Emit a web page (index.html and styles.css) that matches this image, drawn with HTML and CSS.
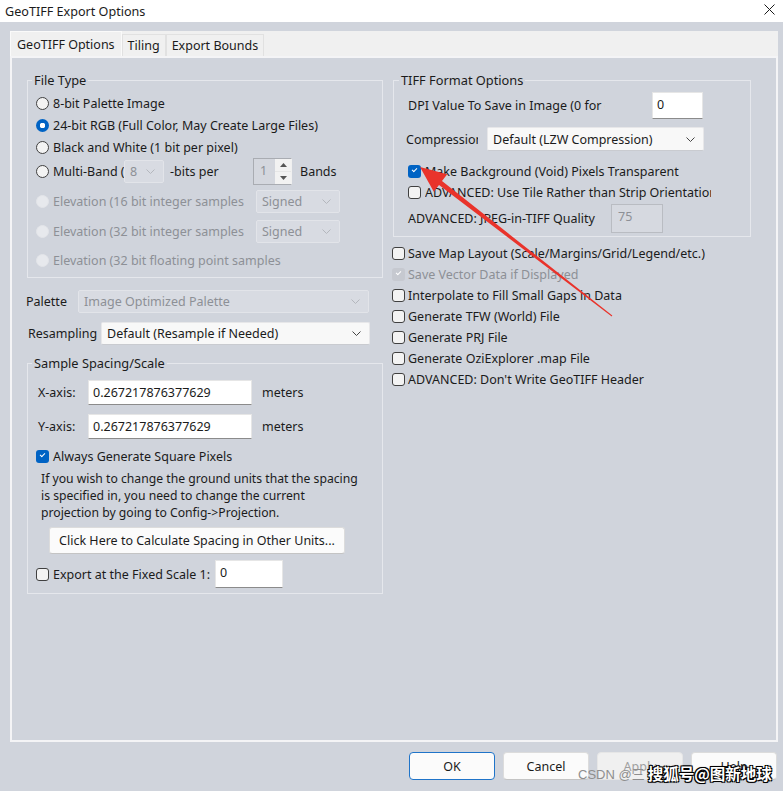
FILE: index.html
```html
<!DOCTYPE html>
<html lang="en">
<head>
    <meta charset="UTF-8">
    <title>GeoTIFF Export Options</title>
    <link rel="stylesheet" href="styles.css">
</head>
<body>
<div class="window">
    <div class="titlebar">
        <span class="title">GeoTIFF Export Options</span>
        <svg class="close" width="11" height="11" viewBox="0 0 11 11"><path d="M0.5 0.5 L10.5 10.5 M10.5 0.5 L0.5 10.5" stroke="#1a1a1a" stroke-width="1"/></svg>
    </div>

    <div class="tabs">
        <div class="tab active">GeoTIFF Options</div>
        <div class="tab">Tiling</div>
        <div class="tab">Export Bounds</div>
    </div>

    <div class="panel">
        <!-- left column -->
        <div class="col col-left">
            <fieldset class="group group-filetype">
                <legend>File Type</legend>
                <div class="row r1"><span class="radio"></span>8-bit Palette Image</div>
                <div class="row r2"><span class="radio on"></span>24-bit RGB (Full Color, May Create Large Files)</div>
                <div class="row r3"><span class="radio"></span>Black and White (1 bit per pixel)</div>
                <div class="row r4">
                    <span class="radio"></span>
                    <span class="clip w-multi">Multi-Band (</span>
                    <div class="select off w-bits"><span>8</span><svg class="chev" width="9" height="5" viewBox="0 0 9 5"><path d="M0.5 0.5 L4.5 4.5 L8.5 0.5" fill="none" stroke="#b4b7bd"/></svg></div>
                    <span class="bits-per">-bits per</span>
                    <div class="spin">
                        <span class="spin-val">1</span>
                        <span class="spin-btns">
                            <span class="spin-up"><svg width="7" height="4" viewBox="0 0 7 4"><path d="M0 4 L3.5 0 L7 4 Z" fill="#555"/></svg></span>
                            <span class="spin-down"><svg width="7" height="4" viewBox="0 0 7 4"><path d="M0 0 L3.5 4 L7 0 Z" fill="#555"/></svg></span>
                        </span>
                    </div>
                    <span class="bands">Bands</span>
                </div>
                <div class="row r5 dim">
                    <span class="radio dis"></span>
                    <span class="clip w-elev">Elevation (16 bit integer samples)</span>
                    <div class="select off w-signed"><span>Signed</span><svg class="chev" width="9" height="5" viewBox="0 0 9 5"><path d="M0.5 0.5 L4.5 4.5 L8.5 0.5" fill="none" stroke="#b4b7bd"/></svg></div>
                </div>
                <div class="row r6 dim">
                    <span class="radio dis"></span>
                    <span class="clip w-elev">Elevation (32 bit integer samples)</span>
                    <div class="select off w-signed"><span>Signed</span><svg class="chev" width="9" height="5" viewBox="0 0 9 5"><path d="M0.5 0.5 L4.5 4.5 L8.5 0.5" fill="none" stroke="#b4b7bd"/></svg></div>
                </div>
                <div class="row r7 dim"><span class="radio dis"></span>Elevation (32 bit floating point samples</div>
            </fieldset>

            <div class="line palette-line">
                <span class="lbl w-palette">Palette</span>
                <div class="select off w-palette-sel"><span>Image Optimized Palette</span><svg class="chev" width="9" height="5" viewBox="0 0 9 5"><path d="M0.5 0.5 L4.5 4.5 L8.5 0.5" fill="none" stroke="#b4b7bd"/></svg></div>
            </div>
            <div class="line resample-line">
                <span class="lbl w-resample">Resampling</span>
                <div class="select w-resample-sel"><span>Default (Resample if Needed)</span><svg class="chev" width="9" height="5" viewBox="0 0 9 5"><path d="M0.5 0.5 L4.5 4.5 L8.5 0.5" fill="none" stroke="#444"/></svg></div>
            </div>

            <fieldset class="group group-spacing">
                <legend>Sample Spacing/Scale</legend>
                <div class="axis">
                    <span class="axis-lbl">X-axis:</span>
                    <div class="input w-axis">0.267217876377629</div>
                    <span class="unit">meters</span>
                </div>
                <div class="axis axis-y">
                    <span class="axis-lbl">Y-axis:</span>
                    <div class="input w-axis">0.267217876377629</div>
                    <span class="unit">meters</span>
                </div>
                <div class="check-row square-row"><span class="check on"></span>Always Generate Square Pixels</div>
                <p class="note">If you wish to change the ground units that the spacing<br>is specified in, you need to change the current<br>projection by going to Config-&gt;Projection.</p>
                <div class="btn calc-btn">Click Here to Calculate Spacing in Other Units...</div>
                <div class="check-row scale-row">
                    <span class="check"></span>
                    <span>Export at the Fixed Scale 1:</span>
                    <div class="input top w-scale">0</div>
                </div>
            </fieldset>
        </div>

        <!-- right column -->
        <div class="col col-right">
            <fieldset class="group group-tiff">
                <legend>TIFF Format Options</legend>
                <div class="line dpi-line">
                    <span class="lbl clip w-dpi">DPI Value To Save in Image (0 for default)</span>
                    <div class="input top w-dpi-in">0</div>
                </div>
                <div class="line comp-line">
                    <span class="lbl clip w-comp">Compression</span>
                    <div class="select w-comp-sel"><span>Default (LZW Compression)</span><svg class="chev" width="9" height="5" viewBox="0 0 9 5"><path d="M0.5 0.5 L4.5 4.5 L8.5 0.5" fill="none" stroke="#444"/></svg></div>
                </div>
                <div class="check-row bg-row"><span class="check on"></span>Make Background (Void) Pixels Transparent</div>
                <div class="check-row tile-row"><span class="check"></span><span class="clip w-tile">ADVANCED: Use Tile Rather than Strip Orientation</span></div>
                <div class="line jpeg-line">
                    <span class="lbl w-jpeg">ADVANCED: JPEG-in-TIFF Quality</span>
                    <div class="input top off w-jpeg-in">75</div>
                </div>
            </fieldset>

            <div class="checks">
                <div class="opt"><span class="check"></span>Save Map Layout (Scale/Margins/Grid/Legend/etc.)</div>
                <div class="opt dim"><span class="check on dis"></span>Save Vector Data if Displayed</div>
                <div class="opt"><span class="check"></span>Interpolate to Fill Small Gaps in Data</div>
                <div class="opt"><span class="check"></span>Generate TFW (World) File</div>
                <div class="opt"><span class="check"></span>Generate PRJ File</div>
                <div class="opt"><span class="check"></span>Generate OziExplorer .map File</div>
                <div class="opt"><span class="check"></span>ADVANCED: Don't Write GeoTIFF Header</div>
            </div>
        </div>
    </div>

    <div class="buttons">
        <div class="btn dlg default">OK</div>
        <div class="btn dlg">Cancel</div>
        <div class="btn dlg off">Apply</div>
        <div class="btn dlg">Help</div>
    </div>

    <!-- annotation arrow over the screenshot -->
    <svg class="arrow" width="783" height="791" viewBox="0 0 783 791">
        <polygon points="420,167 447.2,174.3 442,181 612.3,315.6 611.7,316.4 439,185 433.8,191.7" fill="#e9332b"/>
    </svg>

    <div class="watermark"><span class="wm-csdn">CSDN @三</span><span class="wm-sohu">搜狐号@图新地球</span></div>
</div>
</body>
</html>
```

FILE: styles.css
```css
:root {
    --face: #d0d4dc;
    --text: #1b1b1b;
    --dim: #8d9096;
    --blue: #0063c4;
}

* {
    box-sizing: border-box;
}

body {
    margin: 0;
    font-family: 'Noto Sans', 'Noto Sans CJK SC', sans-serif;
    font-size: 12.5px;
    color: var(--text);
    background: var(--face);
}

.window {
    position: relative;
    width: 783px;
    height: 791px;
    background: var(--face);
    overflow: hidden;
}

.titlebar {
    height: 22px;
    background: #fff;
    display: flex;
    align-items: center;
    padding: 0 8px 0 5px;
}

.title {
    font-size: 12.6px;
}

.close {
    margin-left: auto;
    margin-top: -4px;
}

/* tabs */
.tabs {
    margin: 9px 5px 0 10px;
    height: 25px;
    background: #f0f0f0;
    display: flex;
    align-items: flex-end;
}

.tab {
    height: 22px;
    padding: 0 5px;
    border: 1px solid #e1e1e1;
    border-bottom: none;
    display: flex;
    align-items: center;
    font-size: 12.5px;
}

.tab.active {
    height: 25px;
    border-color: #fafafa;
    padding: 0 6px;
}

/* tab page */
.panel {
    margin: 0 5px 0 10px;
    height: 686px;
    border: 2px solid #f4f4f6;
    display: flex;
    gap: 10px;
    padding: 14px 0 0 14px;
}

.col-left {
    width: 357px;
}

.col-right {
    width: 359px;
}

.group {
    margin: 0;
    border: 1px solid #e5e7ec;
    padding: 0;
}

.group legend {
    padding: 0 2px;
    margin-left: -4px;
    line-height: 16px;
    font-size: 12.8px;
}

.row, .line, .check-row, .opt, .axis {
    display: flex;
    align-items: center;
    white-space: nowrap;
}

.dim {
    color: var(--dim);
}

.clip {
    overflow: hidden;
    white-space: nowrap;
    display: block;
}

/* file type */
.group-filetype {
    margin-left: 1px;
    width: 356px;
    padding: 4px 0 5px 8px;
}

.row {
    height: 22px;
}

.r3 { height: 23px; }
.r4 { height: 24px; }
.r5 { height: 24px; margin-top: 6px; }
.r6 { height: 24px; margin-top: 6px; }
.r7 { height: 24px; margin-top: 5px; }

.radio {
    width: 13px;
    height: 13px;
    border-radius: 50%;
    border: 1px solid #404040;
    background: #f3f3f3;
    margin-right: 4px;
    flex: none;
}

.radio.on {
    border: none;
    background: radial-gradient(circle, #fff 0 2.6px, var(--blue) 3px);
}

.radio.dis {
    border-color: #e3e5e9;
    background: #e7e9ed;
}

.w-multi { width: 71px; }
.w-bits { width: 40px; height: 23px; }
.bits-per { margin-left: 6px; width: 83px; }
.w-elev { width: 191px; margin-right: 12px; }
.w-signed { width: 84px; height: 23px; }

.spin {
    display: flex;
    height: 27px;
    width: 39px;
    border: 1px solid #a9acb2;
    border-right-color: #f0f0f0;
}

.spin-val {
    flex: 1;
    color: var(--dim);
    background: #d4d7de;
    padding: 3px 0 0 6px;
}

.spin-btns {
    width: 16px;
    display: flex;
    flex-direction: column;
    gap: 1px;
    background: #e6e6e6;
}

.spin-up, .spin-down {
    flex: 1;
    background: #f2f2f2;
    display: flex;
    align-items: center;
    justify-content: center;
}

.bands {
    margin-left: 8px;
}

/* selects */
.select {
    display: flex;
    align-items: center;
    background: #f8f8f8;
    border: 1px solid #e7e7e9;
    border-bottom-color: #c9cbd0;
    border-radius: 2px;
    padding: 0 8px 0 5px;
    flex: none;
}

.select.off {
    background: #d8dbe2;
    border-color: #e2e4e9;
    color: var(--dim);
}

.select .chev {
    margin-left: auto;
}

.lbl {
    flex: none;
}

.palette-line {
    margin-top: 12px;
    height: 23px;
}

.w-palette { width: 52px; }
.w-palette-sel { width: 291px; height: 23px; }

.resample-line {
    margin-top: 9px;
    height: 23px;
    padding-left: 2px;
}

.w-resample { width: 73px; }
.w-resample-sel { width: 269px; height: 23px; }

/* inputs */
.input {
    background: #fff;
    border: 1px solid #e6e6e6;
    border-bottom-color: #8b8b8b;
    display: flex;
    align-items: center;
    padding: 0 4px;
    flex: none;
}

.input.top {
    align-items: flex-start;
    padding-top: 3px;
}

.input.off {
    background: #d6d9e0;
    border: 1px solid #b9bcc2;
    color: var(--dim);
    padding-left: 6px;
}

/* sample spacing */
.group-spacing {
    margin: 10px 0 0 1px;
    width: 356px;
    padding: 9px 0 5px 8px;
}

.axis {
    height: 25px;
}

.axis-y {
    margin-top: 9px;
}

.axis-lbl {
    width: 52px;
    padding-left: 2px;
}

.w-axis {
    width: 164px;
    height: 25px;
}

.unit {
    margin-left: 10px;
}

.check {
    width: 13px;
    height: 13px;
    border: 1px solid #404040;
    border-radius: 3px;
    background: #f3f3f3;
    margin-right: 4px;
    flex: none;
    position: relative;
}

.check.on {
    border: none;
    background: var(--blue);
}

.check.on::after {
    content: '';
    position: absolute;
    left: 4px;
    top: 3px;
    width: 4px;
    height: 2px;
    border-left: 1px solid #fff;
    border-bottom: 1px solid #fff;
    transform: rotate(-45deg);
}

.check.on.dis {
    background: #c6c9d0;
}

.square-row {
    height: 16px;
    margin-top: 9px;
}

.note {
    margin: 6px 0 0 5px;
    line-height: 17px;
    font-size: 12.2px;
    white-space: nowrap;
}

.btn {
    display: flex;
    align-items: center;
    justify-content: center;
    background: #fbfbfb;
    border: 1px solid #dcdcdc;
    border-bottom-color: #c4c4c4;
    border-radius: 3px;
}

.calc-btn {
    margin: 6px 0 0 13px;
    width: 296px;
    height: 27px;
}

.scale-row {
    margin-top: 6px;
    height: 28px;
}

.w-scale {
    width: 68px;
    height: 28px;
    margin-left: 5px;
}

/* tiff options */
.group-tiff {
    width: 358px;
    padding: 4px 0 3px 14px;
}

.group-tiff legend {
    margin-left: -9px;
}

.dpi-line {
    height: 27px;
}

.w-dpi {
    width: 197px;
    margin-right: 47px;
}

.w-dpi-in {
    width: 51px;
    height: 27px;
}

.comp-line {
    margin: 8px 0 0 -2px;
    height: 24px;
}

.w-comp { width: 72px; margin-right: 9px; }
.w-comp-sel { width: 217px; height: 24px; }

.bg-row {
    height: 20px;
    margin-top: 10px;
}

.tile-row {
    height: 20px;
    margin-top: 1px;
}

.w-tile { width: 286px; }

.jpeg-line {
    margin-top: 2px;
    height: 29px;
}

.w-jpeg { width: 203px; }

.w-jpeg-in {
    width: 52px;
    height: 29px;
}

.checks {
    margin-top: 6px;
}

.opt {
    height: 21px;
    margin-left: -1px;
}

.opt .check {
    margin-right: 3px;
}

/* dialog buttons */
.buttons {
    display: flex;
    justify-content: flex-end;
    gap: 8px;
    padding-right: 6px;
    margin-top: 10px;
}

.btn.dlg {
    width: 86px;
    height: 28px;
    border-radius: 4px;
}

.btn.dlg.default {
    border: 1px solid #1f74c9;
}

.btn.dlg.off {
    background: #f0f0f0;
    border-color: #e6e6e6;
    color: #a0a0a0;
}

/* overlays */
.arrow {
    position: absolute;
    left: 0;
    top: 0;
    pointer-events: none;
}

.watermark {
    position: absolute;
    left: 578px;
    top: 762px;
    display: flex;
    align-items: center;
    gap: 3px;
    white-space: nowrap;
}

.wm-csdn {
    color: #8e8e8e;
    font-family: 'Liberation Sans', 'Noto Sans CJK SC', sans-serif;
    font-size: 13px;
}

.wm-sohu {
    color: #fff;
    font-family: 'Noto Sans CJK SC', sans-serif;
    font-size: 15.5px;
    font-weight: bold;
    text-shadow: -1px -1px 0 #000, 1px -1px 0 #000, -1px 1px 0 #000, 1px 1px 0 #000, 0 0 2px #000;
}
```
